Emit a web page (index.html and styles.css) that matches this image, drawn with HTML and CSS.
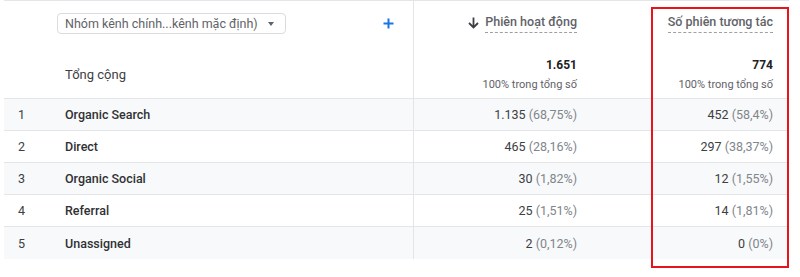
FILE: index.html
```html
<!DOCTYPE html>
<html lang="vi">
<head>
<meta charset="utf-8">
<link rel="stylesheet" href="styles.css">
</head>
<body>
<div class="report">
  <div class="grid">
    <div class="cell head idx"></div>
    <div class="cell head dim">
      <div class="select"><span class="select-text">Nhóm kênh chính...kênh mặc định)</span><span class="caret"></span></div>
      <span class="plus">
        <svg width="11" height="11" viewBox="0 0 11 11"><path d="M5.5 0.5v10M0.5 5.5h10" stroke="#1a73e8" stroke-width="2"/></svg>
      </span>
    </div>
    <div class="cell head metric first">
      <svg class="arrow" width="11" height="12" viewBox="0 0 11 12"><path d="M5.5 0.5v10M1 6l4.5 4.5L10 6" stroke="#3c4043" stroke-width="1.8" fill="none"/></svg>
      <span class="mtitle">Phiên hoạt động</span>
    </div>
    <div class="cell head metric">
      <span class="mtitle">Số phiên tương tác</span>
    </div>

    <div class="cell total idx"></div>
    <div class="cell total name-total">Tổng cộng</div>
    <div class="cell total metric first"><div class="tval">1.651</div><div class="tsub">100% trong tổng số</div></div>
    <div class="cell total metric"><div class="tval">774</div><div class="tsub">100% trong tổng số</div></div>

    <div class="cell row odd idx">1</div>
    <div class="cell row odd name">Organic Search</div>
    <div class="cell row odd val first">1.135 <span class="pct">(68,75%)</span></div>
    <div class="cell row odd val">452 <span class="pct">(58,4%)</span></div>

    <div class="cell row idx">2</div>
    <div class="cell row name">Direct</div>
    <div class="cell row val first">465 <span class="pct">(28,16%)</span></div>
    <div class="cell row val">297 <span class="pct">(38,37%)</span></div>

    <div class="cell row odd idx">3</div>
    <div class="cell row odd name">Organic Social</div>
    <div class="cell row odd val first">30 <span class="pct">(1,82%)</span></div>
    <div class="cell row odd val">12 <span class="pct">(1,55%)</span></div>

    <div class="cell row idx">4</div>
    <div class="cell row name">Referral</div>
    <div class="cell row val first">25 <span class="pct">(1,51%)</span></div>
    <div class="cell row val">14 <span class="pct">(1,81%)</span></div>

    <div class="cell row odd last idx">5</div>
    <div class="cell row odd last name">Unassigned</div>
    <div class="cell row odd last val first">2 <span class="pct">(0,12%)</span></div>
    <div class="cell row odd last val">0 <span class="pct">(0%)</span></div>
  </div>
  <div class="highlight"></div>
</div>
</body>
</html>
```

FILE: styles.css
```css
html, body {
  margin: 0;
  padding: 0;
  background: #fff;
}
body {
  font-family: Roboto, "Noto Sans", Arial, sans-serif;
  color: #3c4043;
}
.report {
  position: relative;
  width: 800px;
  height: 277px;
}
.grid {
  display: grid;
  grid-template-columns: 53px 356px 180px 196px;
  grid-template-rows: 44px 54px repeat(5, 32px);
  margin-left: 4px;
  width: 785px;
  border-top: 1px solid #e3e5e8;
}
.cell {
  display: flex;
  align-items: center;
  box-sizing: border-box;
}
.head.dim {
  justify-content: space-between;
  padding-right: 19px;
  padding-top: 1px;
}
.select {
  display: flex;
  align-items: center;
  box-sizing: border-box;
  width: 229px;
  height: 21px;
  border: 1px solid #dadce0;
  border-radius: 4px;
  padding: 0 8px 0 7px;
  justify-content: space-between;
}
.select-text {
  font-size: 12.5px;
  color: #5f6368;
  white-space: nowrap;
}
.caret {
  width: 0;
  height: 0;
  border-left: 3.5px solid transparent;
  border-right: 3.5px solid transparent;
  border-top: 4px solid #5f6368;
  margin-right: 3px;
}
.plus {
  display: flex;
}
.metric {
  justify-content: flex-end;
  padding-right: 16px;
}
.first {
  border-left: 1px solid #e3e5e8;
}
.head.metric {
  padding-top: 1px;
}
.arrow {
  margin-right: 6px;
  margin-bottom: 2px;
}
.mtitle {
  font-size: 12.5px;
  color: #5f6368;
  font-weight: 500;
  border-bottom: 1px dashed #9aa0a6;
  padding-bottom: 2px;
  line-height: 16px;
}
.total {
  border-bottom: 1px solid #e3e5e8;
}
.total.metric {
  flex-direction: column;
  align-items: flex-end;
  justify-content: flex-start;
  padding-top: 12px;
}
.tval {
  font-size: 12px;
  font-weight: 700;
  color: #202124;
  line-height: 16px;
}
.tsub {
  font-size: 11px;
  color: #5f6368;
  line-height: 16px;
  margin-top: 4px;
}
.name-total {
  font-size: 13px;
  color: #3c4043;
  padding-left: 8px;
  padding-top: 6px;
}
.row {
  border-bottom: 1px solid #e3e5e8;
  font-size: 12.5px;
}
.row.last {
  border-bottom: none;
}
.row.odd {
  background: #f8f9fa;
}
.idx {
  padding-left: 14px;
  color: #3c4043;
}
.name {
  padding-left: 8px;
  font-weight: 500;
  color: #303134;
}
.val {
  justify-content: flex-end;
  padding-right: 16px;
  color: #3c4043;
  white-space: pre;
}
.pct {
  color: #80868b;
}
.highlight {
  position: absolute;
  left: 651px;
  top: 7px;
  width: 138px;
  height: 261px;
  box-sizing: border-box;
  border: 2px solid #e8141c;
}
```
